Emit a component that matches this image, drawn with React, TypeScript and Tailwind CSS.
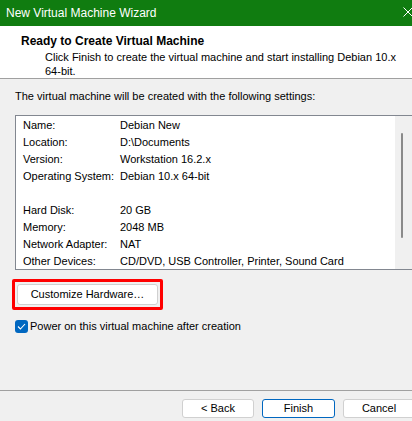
import React from "react"

const rows: [string, string][] = [
  ["Name:", "Debian New"],
  ["Location:", "D:\\Documents"],
  ["Version:", "Workstation 16.2.x"],
  ["Operating System:", "Debian 10.x 64-bit"],
  ["", ""],
  ["Hard Disk:", "20 GB"],
  ["Memory:", "2048 MB"],
  ["Network Adapter:", "NAT"],
  ["Other Devices:", "CD/DVD, USB Controller, Printer, Sound Card"],
]

export default function App(): JSX.Element {
  return (
    <div
      className="w-[412px] h-[421px] overflow-hidden flex flex-col bg-[#f0f0f0] text-[11px] text-black"
      style={{ fontFamily: '"Liberation Sans", Arial, sans-serif' }}
    >
      {/* title bar */}
      <div className="h-[26px] bg-[#107c10] flex items-center justify-between pl-[6px] text-white text-[12px] shrink-0">
        <span className="leading-none">New Virtual Machine Wizard</span>
        <svg width="11" height="10" viewBox="0 0 11 10" className="mr-[-2px] mt-[-2px]">
          <path d="M0.5 0.5 L9.5 9.5 M9.5 0.5 L0.5 9.5" stroke="white" strokeWidth="1" />
        </svg>
      </div>

      {/* header */}
      <div className="h-[53px] bg-white border-b border-[#a0a0a0] pt-[7px] shrink-0">
        <div className="pl-[21px] font-bold text-[12px] leading-[16px]">Ready to Create Virtual Machine</div>
        <div className="pl-[45px] pr-[2px] leading-[14px] mt-[1px]">
          Click Finish to create the virtual machine and start installing Debian 10.x 64-bit.
        </div>
      </div>

      {/* body */}
      <div className="flex-1 flex flex-col pl-[15px]">
        <div className="mt-[9px] leading-[16px]">The virtual machine will be created with the following settings:</div>

        <div className="mt-[11px] h-[155px] border border-[#828790] border-r-0 bg-white flex">
          <div className="flex-1 pl-[7px] pt-[1px]">
            {rows.map(([label, value], i) => (
              <div key={i} className="h-[17px] flex items-center">
                <span className="w-[97px] shrink-0">{label}</span>
                <span>{value}</span>
              </div>
            ))}
          </div>
          <div className="w-[17px] bg-[#f0f0f0] flex justify-center pt-[17px]">
            <div className="w-[2px] h-[105px] bg-[#8a8a8a] rounded-full ml-[-3px]" />
          </div>
        </div>

        <div className="mt-[9px] ml-[-3px] w-[151px] h-[31px] border-[3px] border-[#ff0000] rounded-[2px] flex items-center justify-center">
          <button className="w-[141px] h-[21px] bg-white border border-[#d0d0d0] rounded-[3px] leading-none text-black">
            Customize Hardware…
          </button>
        </div>

        <div className="mt-[10px] flex items-center gap-[2px]">
          <div className="w-[13px] h-[13px] rounded-[3px] bg-[#0067c0] flex items-center justify-center">
            <svg width="9" height="7" viewBox="0 0 9 7">
              <path d="M1 3.5 L3.4 6 L8 1" stroke="white" strokeWidth="1.1" fill="none" />
            </svg>
          </div>
          <span className="leading-none">Power on this virtual machine after creation</span>
        </div>
      </div>

      {/* footer */}
      <div className="h-[31px] border-t border-[#a0a0a0] flex justify-end pt-[8px] shrink-0">
        <div className="flex items-start gap-[8px] mr-[-3px]">
          <button className="w-[72px] h-[19px] bg-white border border-[#d0d0d0] rounded-[3px] leading-none">&lt; Back</button>
          <button className="w-[73px] h-[19px] bg-white border border-[#0067c0] rounded-[3px] leading-none">Finish</button>
          <button className="w-[72px] h-[19px] bg-white border border-[#d0d0d0] rounded-[3px] leading-none">Cancel</button>
        </div>
      </div>
    </div>
  )
}
